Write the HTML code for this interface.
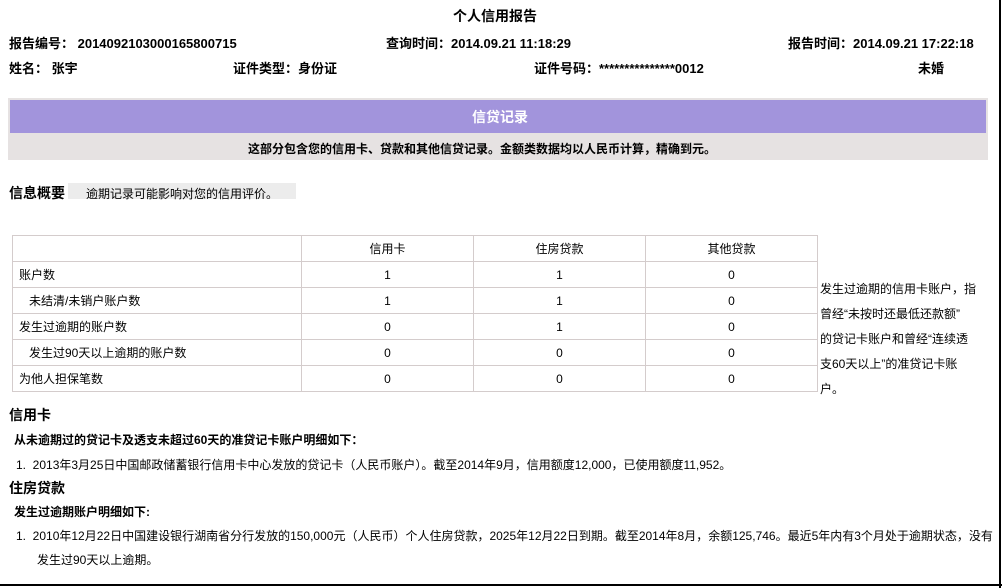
<!DOCTYPE html>
<html><head><meta charset="utf-8"><style>
body{margin:0;width:1002px;height:588px;background:#fff;position:relative;overflow:hidden;font-family:"Liberation Sans","WenQuanYi Zen Hei","Noto Sans CJK SC",sans-serif;color:#000;font-size:12px}
.a{position:absolute;white-space:nowrap}
.b{font-weight:bold;font-size:13px}
table{position:absolute;left:12px;top:235px;border-collapse:collapse;font-size:12px}
td{border:1px solid #d4cccc;height:25px;padding:0 6px}
td.c{text-align:center}
</style></head><body>
<div style="position:absolute;left:999px;top:0;width:2px;height:588px;background:#000"></div>
<div style="position:absolute;left:0;top:584px;width:1002px;height:2px;background:#000"></div>
<div class="a b" style="left:453px;top:6px;font-size:14px">个人信用报告</div>
<div class="a b" style="left:9px;top:33px">报告编号： 2014092103000165800715</div>
<div class="a b" style="left:386px;top:33px">查询时间：2014.09.21 11:18:29</div>
<div class="a b" style="left:788px;top:33px">报告时间：2014.09.21 17:22:18</div>
<div class="a b" style="left:9px;top:58px">姓名： 张宇</div>
<div class="a b" style="left:233px;top:58px">证件类型：身份证</div>
<div class="a b" style="left:534px;top:58px">证件号码：***************0012</div>
<div class="a b" style="left:918px;top:58px">未婚</div>
<div style="position:absolute;left:8px;top:98px;width:980px;height:62px;background:#e6e2e2"></div>
<div style="position:absolute;left:10px;top:100px;width:976px;height:33px;background:#a294dc"></div>
<div class="a b" style="left:472px;top:107px;color:#fff;font-size:14px">信贷记录</div>
<div class="a b" style="left:248px;top:140px;font-size:12px">这部分包含您的信用卡、贷款和其他信贷记录。金额类数据均以人民币计算，精确到元。</div>
<div class="a b" style="left:9px;top:183px;font-size:14px">信息概要</div>
<div style="position:absolute;left:68px;top:183px;width:228px;height:16px;background:#ececec"></div>
<div class="a" style="left:86px;top:185px">逾期记录可能影响对您的信用评价。</div>
<table>
<tr><td style="width:276px"></td><td class="c" style="width:159px">信用卡</td><td class="c" style="width:159px">住房贷款</td><td class="c" style="width:159px">其他贷款</td></tr>
<tr><td>账户数</td><td class="c">1</td><td class="c">1</td><td class="c">0</td></tr>
<tr><td>&nbsp;&nbsp;&nbsp;未结清/未销户账户数</td><td class="c">1</td><td class="c">1</td><td class="c">0</td></tr>
<tr><td>发生过逾期的账户数</td><td class="c">0</td><td class="c">1</td><td class="c">0</td></tr>
<tr><td>&nbsp;&nbsp;&nbsp;发生过90天以上逾期的账户数</td><td class="c">0</td><td class="c">0</td><td class="c">0</td></tr>
<tr><td>为他人担保笔数</td><td class="c">0</td><td class="c">0</td><td class="c">0</td></tr>
</table>
<div class="a" style="left:820px;top:277px;line-height:25px">发生过逾期的信用卡账户，指<br>曾经“未按时还最低还款额”<br>的贷记卡账户和曾经“连续透<br>支60天以上”的准贷记卡账<br>户。</div>
<div class="a b" style="left:9px;top:405px;font-size:14px">信用卡</div>
<div class="a b" style="left:14px;top:431px;font-size:12px">从未逾期过的贷记卡及透支未超过60天的准贷记卡账户明细如下：</div>
<div class="a" style="left:16px;top:456px">1.&nbsp;&nbsp;2013年3月25日中国邮政储蓄银行信用卡中心发放的贷记卡（人民币账户）。截至2014年9月，信用额度12,000，已使用额度11,952。</div>
<div class="a b" style="left:9px;top:478px;font-size:14px">住房贷款</div>
<div class="a b" style="left:14px;top:503px;font-size:12px">发生过逾期账户明细如下:</div>
<div class="a" style="left:16px;top:527px">1.&nbsp;&nbsp;2010年12月22日中国建设银行湖南省分行发放的150,000元（人民币）个人住房贷款，2025年12月22日到期。截至2014年8月，余额125,746。最近5年内有3个月处于逾期状态，没有</div>
<div class="a" style="left:37px;top:551px">发生过90天以上逾期。</div>
</body></html>
